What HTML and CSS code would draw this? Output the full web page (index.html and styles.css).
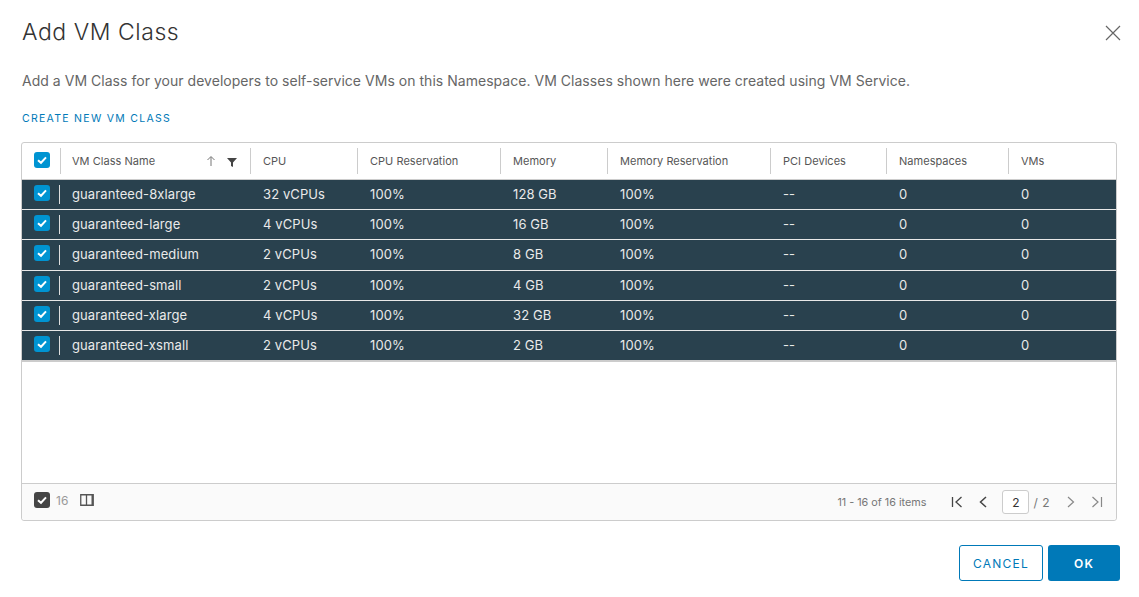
FILE: index.html
```html
<!DOCTYPE html>
<html lang="en">
<head>
    <meta charset="UTF-8">
    <title>Add VM Class</title>
    <link rel="stylesheet" href="styles.css">
</head>
<body>
    <div class="modal">
        <div class="modal-head">
            <h1>Add VM Class</h1>
            <svg class="close" width="16" height="16" viewBox="0 0 16 16"><path d="M1 1l14 14M15 1L1 15" stroke="#666" stroke-width="1.2" fill="none"/></svg>
        </div>
        <p class="intro">Add a VM Class for your developers to self-service VMs on this Namespace. VM Classes shown here were created using VM Service.</p>
        <a class="create-link">CREATE NEW VM CLASS</a>

        <div class="grid">
            <div class="row head">
                <div class="cell check"><span class="box"><svg width="16" height="16" viewBox="0 0 16 16"><path d="M4 8.2l3 2.6 5-5.4" stroke="#fff" stroke-width="2" fill="none"/></svg></span></div>
                <div class="cell name-head">
                    <span class="grow">VM Class Name</span>
                    <svg width="10" height="12" viewBox="0 0 10 12"><path d="M5 11V2M1.5 5L5 1.5 8.500 5" stroke="#777" stroke-width="1" fill="none"/></svg>
                    <svg class="funnel" width="10" height="10" viewBox="0 0 10 10"><path d="M0 1h10L6 5.500V10L4 9V5.500z" fill="#444"/></svg>
                </div>
                <div class="cell">CPU</div>
                <div class="cell">CPU Reservation</div>
                <div class="cell">Memory</div>
                <div class="cell">Memory Reservation</div>
                <div class="cell">PCI Devices</div>
                <div class="cell">Namespaces</div>
                <div class="cell">VMs</div>
            </div>
            <div id="rows"></div>
            <div class="empty"></div>
            <div class="foot">
                <span class="box dark"><svg width="16" height="16" viewBox="0 0 16 16"><path d="M4 8.200l3 2.600 5-5.400" stroke="#fff" stroke-width="2" fill="none"/></svg></span>
                <span class="count">16</span>
                <svg class="columns" width="14" height="12" viewBox="0 0 14 12"><path d="M.75.75h12.500v10.500H.75zM6.500 .75v10.500" stroke="#555" stroke-width="1.300" fill="none"/><path d="M11.500 1H13v10h-1.500z" fill="#555"/></svg>
                <span class="grow"></span>
                <span class="items">11 - 16 of 16 items</span>
                <svg class="pg first" width="12" height="12" viewBox="0 0 12 12"><path d="M1.500 1v10M10.500 1L5 6l5.500 5" stroke="#444" stroke-width="1.300" fill="none"/></svg>
                <svg class="pg prev" width="8" height="12" viewBox="0 0 8 12"><path d="M7 1L1.500 6 7 11" stroke="#444" stroke-width="1.500" fill="none"/></svg>
                <span class="page-input">2</span>
                <span class="page-total">/ 2</span>
                <svg class="pg next" width="8" height="12" viewBox="0 0 8 12"><path d="M1 1l5.500 5L1 11" stroke="#888" stroke-width="1.200" fill="none"/></svg>
                <svg class="pg last" width="12" height="12" viewBox="0 0 12 12"><path d="M10.500 1v10M1.500 1L7 6l-5.500 5" stroke="#888" stroke-width="1.200" fill="none"/></svg>
            </div>
        </div>

        <div class="actions">
            <button class="btn outline">CANCEL</button>
            <button class="btn solid">OK</button>
        </div>
    </div>

    <script>
        const classes = [
            ['guaranteed-8xlarge', '32 vCPUs', '128 GB'],
            ['guaranteed-large', '4 vCPUs', '16 GB'],
            ['guaranteed-medium', '2 vCPUs', '8 GB'],
            ['guaranteed-small', '2 vCPUs', '4 GB'],
            ['guaranteed-xlarge', '4 vCPUs', '32 GB'],
            ['guaranteed-xsmall', '2 vCPUs', '2 GB']
        ];
        document.getElementById('rows').innerHTML = classes.map(c => `
            <div class="row item">
                <div class="cell check"><span class="box"><svg width="16" height="16" viewBox="0 0 16 16"><path d="M4 8.200l3 2.600 5-5.400" stroke="#fff" stroke-width="2" fill="none"/></svg></span></div>
                <div class="cell">${c[0]}</div>
                <div class="cell">${c[1]}</div>
                <div class="cell">100%</div>
                <div class="cell">${c[2]}</div>
                <div class="cell">100%</div>
                <div class="cell">--</div>
                <div class="cell">0</div>
                <div class="cell">0</div>
            </div>
        `).join('');
    </script>
</body>
</html>
```

FILE: styles.css
```css
html, body {
    margin: 0;
    height: 597px;
    overflow: hidden;
    background: #fff;
}
body {
    font-family: Inter, "Liberation Sans", sans-serif;
    color: #565656;
}
.modal {
    padding: 0 19px 0 22px;
}
.modal-head {
    display: flex;
    justify-content: space-between;
    align-items: center;
    height: 64px;
}
h1 {
    margin: 0;
    font-size: 23px;
    font-weight: 300;
    letter-spacing: 0.55px;
    color: #333;
}
.close {
    margin: 2px -1px 0 0;
}
.intro {
    margin: 8px 0 0;
    font-size: 14px;
    line-height: 18px;
    letter-spacing: 0.03px;
    color: #666;
}
.create-link {
    display: block;
    margin-top: 23px;
    font-size: 10.500px;
    line-height: 12px;
    letter-spacing: 1.28px;
    color: #0079b8;
}
.grid {
    margin: 17px 3px 0 -1px;
    height: 377px;
    border: 1px solid #ccc;
    border-radius: 3px;
    display: flex;
    flex-direction: column;
}
.row {
    display: grid;
    grid-template-columns: 38px 190px 107px 143px 107px 163px 116px 122px 1fr;
    align-items: center;
}
.head {
    height: 36px;
    border-bottom: 1px solid #ccc;
    font-size: 11px;
    letter-spacing: 0.03px;
    color: #565656;
}
.head .cell {
    height: 26px;
    padding-left: 12px;
    border-left: 1px solid #ccc;
    display: flex;
    align-items: center;
}
.head .check {
    border-left: 0;
}
.head .box {
    margin-top: -2px;
}
.head .name-head {
    padding-left: 11px;
}
.name-head svg {
    margin-right: 5px;
}
.name-head .funnel {
    margin: 2px 13px 0 6px;
}
.grow {
    flex: 1;
}
.item {
    height: 29.200px;
    background: #29414e;
    border-bottom: 1px solid #e8e8e8;
    color: #eaeaea;
    font-size: 13px;
    letter-spacing: 0.1px;
}
.item:last-child {
    border-bottom: 2px solid #ccc;
}
.item .cell {
    padding-left: 13px;
    padding-bottom: 1px;
}
.item .cell:nth-child(2) {
    padding-left: 12px;
}
.item .check {
    height: 100%;
    display: flex;
    align-items: center;
    position: relative;
    padding: 0 0 3px 12px;
    box-sizing: border-box;
}
.item .check::after {
    content: "";
    position: absolute;
    right: 0;
    top: 5px;
    bottom: 5px;
    border-right: 1px solid #ddd;
}
.cell.check {
    padding-left: 12px;
}
.box {
    display: block;
    width: 16px;
    height: 16px;
    border-radius: 3px;
    background: #0094d2;
}
.box svg {
    display: block;
}
.box.dark {
    background: #454545;
    margin-bottom: 4px;
}
.empty {
    flex: 1;
}
.foot {
    height: 36px;
    background: #fafafa;
    border-top: 1px solid #ccc;
    border-radius: 0 0 3px 3px;
    display: flex;
    align-items: center;
    padding: 0 13px 0 12px;
    font-size: 10.800px;
    color: #777;
}
.count {
    margin: 0 0 4px 6px;
    font-size: 12px;
    color: #999;
}
.columns {
    margin: 0 0 4px 12px;
}
.pg {
    flex: none;
}
.first {
    margin-left: 25px;
}
.prev {
    margin-left: 16px;
}
.page-input {
    margin-left: 15px;
    width: 25px;
    height: 22px;
    border: 1px solid #ccc;
    border-radius: 3px;
    background: #fff;
    color: #333;
    font-size: 12px;
    display: flex;
    align-items: center;
    justify-content: center;
}
.page-total {
    margin-left: 4px;
    font-size: 12px;
    letter-spacing: 0.5px;
}
.next {
    margin-left: 17px;
}
.last {
    margin-left: 16px;
}
.actions {
    display: flex;
    justify-content: flex-end;
    gap: 5px;
    margin-top: 24px;
}
.btn {
    height: 36px;
    border-radius: 3px;
    font-family: inherit;
    font-size: 12px;
    letter-spacing: 1.200px;
    padding: 0;
}
.outline {
    width: 84px;
    background: #fff;
    color: #0079b8;
    border: 1px solid #0079b8;
}
.solid {
    width: 72px;
    background: #0079b8;
    color: #fff;
    border: 0;
    font-weight: 600;
}
```
